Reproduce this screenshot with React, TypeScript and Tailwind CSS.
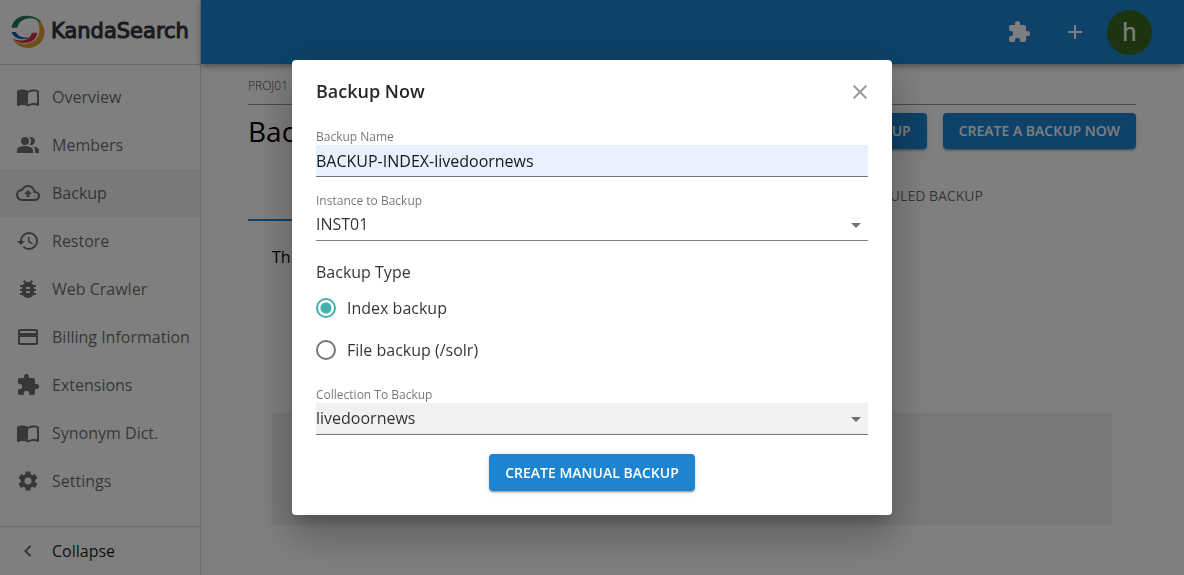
"use client";

import React, { useState } from 'react';
import {
    MdAdd,
    MdArrowDropDown,
    MdBugReport,
    MdChevronLeft,
    MdClose,
    MdExtension,
    MdHistory,
    MdImportContacts,
    MdOutlineCloudUpload,
    MdPayment,
    MdPeopleAlt,
    MdSettings,
} from 'react-icons/md';

const NAV_ITEMS = [
    { label: 'Overview', icon: MdImportContacts },
    { label: 'Members', icon: MdPeopleAlt },
    { label: 'Backup', icon: MdOutlineCloudUpload },
    { label: 'Restore', icon: MdHistory },
    { label: 'Web Crawler', icon: MdBugReport },
    { label: 'Billing Information', icon: MdPayment },
    { label: 'Extensions', icon: MdExtension },
    { label: 'Synonym Dict.', icon: MdImportContacts },
    { label: 'Settings', icon: MdSettings },
];

const BACKUP_TYPES = [
    { value: 'index', label: 'Index backup' },
    { value: 'file', label: 'File backup (/solr)' },
];

function Logo() {
    return (
        <a href="#" className="flex h-[65px] items-center gap-[6px] border-b border-black/15 px-[11px]">
            <svg width="34" height="34" viewBox="0 0 34 34" className="shrink-0">
                <path d="M24.5 3C30 6 33.5 11 33.5 17C33.5 26 26 33 17.5 33C10 33 4 29 1.7 24.3C5 27.5 10 29.3 15 28.8C23 28 28.5 22.5 28.5 15C28.5 10 27 6 24.5 3Z" fill="#dc9c2c" />
                <path d="M0.5 12.7C2 5 8 0.8 15 0.8C22 0.8 28 3 30.5 8C27 4.5 23 3 19 3.2C12 3.5 7.5 7 6.3 12.7Z" fill="#227a5c" />
                <path d="M0.6 17H5C6.5 21 11 23.2 19.5 22.5C13 25.5 3 25 0.6 17Z" fill="#1464b0" />
                <path d="M20.7 17.7H26.5C25.5 24 20 28 14 28C8.5 28 4 26.5 2 23.8C5 25 9 26 13 25.2C17 24.5 20 21.5 20.7 17.7Z" fill="#d0303c" />
            </svg>
            <span className="font-['DejaVu_Sans',sans-serif] text-[21px] text-[#32323c] [-webkit-text-stroke:1px_#32323c]">KandaSearch</span>
        </a>
    );
}

function Sidebar() {
    return (
        <aside className="flex w-[201px] shrink-0 flex-col border-r border-black/15">
            <Logo />
            <nav className="flex flex-1 flex-col pt-2">
                {NAV_ITEMS.map(({ label, icon: Icon }) => (
                    <a
                        key={label}
                        href="#"
                        className={`flex h-12 items-center gap-3 px-4 text-base whitespace-nowrap text-black/60 ${label === 'Backup' ? 'bg-black/5' : ''}`}
                    >
                        <Icon size={24} className="shrink-0 text-[#6f6f6f]" />
                        {label}
                    </a>
                ))}
            </nav>
            <button className="flex h-[49px] items-center gap-3 border-t border-black/15 px-4 text-base text-black/90">
                <MdChevronLeft size={24} className="text-[#6f6f6f]" />
                Collapse
            </button>
        </aside>
    );
}

function PrimaryButton({ children }: { children: React.ReactNode }) {
    return (
        <button className="rounded-sm bg-[#1c84d0] px-4 py-2 text-sm font-semibold text-white uppercase shadow-[0_3px_1px_-2px_rgba(0,0,0,0.2),0_2px_2px_rgba(0,0,0,0.14),0_1px_5px_rgba(0,0,0,0.12)]">
            {children}
        </button>
    );
}

interface SelectFieldProps {
    id: string;
    label: string;
    value: string;
    filled?: boolean;
}

function SelectField({ id, label, value, filled }: SelectFieldProps) {
    return (
        <div className="mt-4 flex flex-col">
            <label htmlFor={id} className="text-xs text-black/55">{label}</label>
            <div className={`relative h-8 border-b border-black/50 ${filled ? 'bg-[#f1f1f1]' : ''}`}>
                <select id={id} defaultValue={value} className="h-full w-full appearance-none pb-0.5 text-base text-black/80 outline-none">
                    <option>{value}</option>
                </select>
                <MdArrowDropDown size={24} className="pointer-events-none absolute top-1 right-0 text-black/55" />
            </div>
        </div>
    );
}

function BackupDialog() {
    const [name, setName] = useState('BACKUP-INDEX-livedoornews');
    const [type, setType] = useState('index');

    return (
        <div className="fixed inset-0 flex items-center justify-center bg-black/50">
            <form
                role="dialog"
                aria-labelledby="dialog-title"
                onSubmit={(e) => e.preventDefault()}
                className="w-[600px] max-w-full rounded-sm bg-white px-6 pb-6 shadow-[0_11px_15px_-7px_rgba(0,0,0,0.2),0_24px_38px_3px_rgba(0,0,0,0.14),0_9px_46px_8px_rgba(0,0,0,0.12)]"
            >
                <div className="flex h-[63px] items-center justify-between">
                    <h2 id="dialog-title" className="pb-0.5 text-lg font-semibold text-black/85">Backup Now</h2>
                    <button type="button" aria-label="Close" className="-mr-1 text-[#999]">
                        <MdClose size={24} />
                    </button>
                </div>

                <div className="flex flex-col pt-[6px]">
                    <label htmlFor="name" className="text-xs text-black/55">Backup Name</label>
                    <input
                        id="name"
                        value={name}
                        onChange={(e) => setName(e.target.value)}
                        className="h-8 border-b border-black/50 bg-[#e8f0fe] text-base text-black/90 outline-none"
                    />
                </div>

                <SelectField id="instance" label="Instance to Backup" value="INST01" />

                <fieldset className="mt-[19px]">
                    <legend className="mb-[3px] text-base text-black/80">Backup Type</legend>
                    {BACKUP_TYPES.map((item) => (
                        <label key={item.value} className="flex h-[42px] items-center gap-[11px] text-base text-black/80">
                            <input
                                type="radio"
                                name="type"
                                value={item.value}
                                checked={type === item.value}
                                onChange={() => setType(item.value)}
                                className="size-5 appearance-none rounded-full border-2 border-[#757575] checked:border-[#41b0ae] checked:bg-[radial-gradient(circle,#41b0ae_5px,transparent_6px)]"
                            />
                            {item.label}
                        </label>
                    ))}
                </fieldset>

                <SelectField id="collection" label="Collection To Backup" value="livedoornews" filled />

                <div className="mt-[19px] flex h-[37px] justify-center">
                    <PrimaryButton>Create manual backup</PrimaryButton>
                </div>
            </form>
        </div>
    );
}

export default function App() {
    return (
        <div className="flex min-h-screen bg-white font-['Open_Sans',sans-serif]">
            <Sidebar />
            <div className="flex min-w-0 flex-1 flex-col">
                <header className="flex h-16 items-center justify-end bg-[#1c84d0] pr-8 text-white shadow-[0_2px_4px_-1px_rgba(0,0,0,0.2),0_4px_5px_rgba(0,0,0,0.14),0_1px_10px_rgba(0,0,0,0.12)]">
                    <button aria-label="Extensions" className="mr-8"><MdExtension size={24} /></button>
                    <button aria-label="Add" className="mr-5"><MdAdd size={24} /></button>
                    <button className="size-[45px] rounded-full bg-[#38691e] font-[Roboto,sans-serif] text-[26px]">h</button>
                </header>
                <main className="flex-1 pr-12 pl-[47px]">
                    <div className="flex h-[41px] items-center border-b border-black/40 pt-1 text-xs font-light text-black/80">
                        <a href="#">PROJ01</a>
                    </div>
                    <div className="mt-2 flex items-center justify-between">
                        <h1 className="text-[28px] leading-9 text-black">Backup</h1>
                        <div className="flex gap-4">
                            <PrimaryButton>Schedule backup</PrimaryButton>
                            <PrimaryButton>Create a backup now</PrimaryButton>
                        </div>
                    </div>
                    <div role="tablist" className="mt-6 grid grid-cols-2 text-sm font-medium">
                        <button role="tab" aria-selected="true" className="h-12 border-b-2 border-[#1c84d0] text-[#1c84d0]">MANUAL BACKUP</button>
                        <button role="tab" aria-selected="false" className="h-12 border-b-2 border-transparent text-black/60">SCHEDULED BACKUP</button>
                    </div>
                    <section className="px-6 pt-6">
                        <p className="text-base text-black">This project has no backups.</p>
                        <div className="mt-36 h-28 bg-black/5" />
                    </section>
                </main>
            </div>
            <BackupDialog />
        </div>
    );
}
